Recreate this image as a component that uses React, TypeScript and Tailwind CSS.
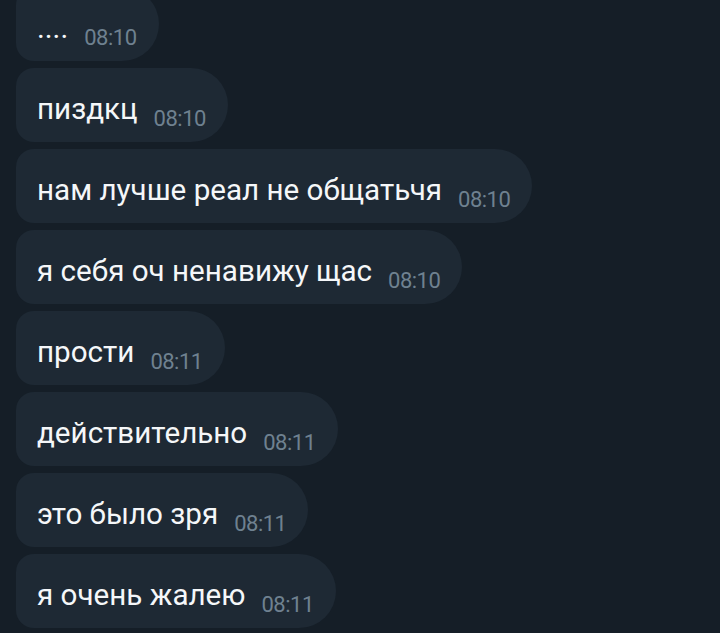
const messages = [
  { text: '....', time: '08:10' },
  { text: 'пиздкц', time: '08:10' },
  { text: 'нам лучше реал не общатьчя', time: '08:10' },
  { text: 'я себя оч ненавижу щас', time: '08:10' },
  { text: 'прости', time: '08:11' },
  { text: 'действительно', time: '08:11' },
  { text: 'это было зря', time: '08:11' },
  { text: 'я очень жалею', time: '08:11' },
];

function Bubble({ text, time }: { text: string; time: string }) {
  return (
    <div className="flex h-[74px] w-fit items-baseline rounded-l-[18px] rounded-r-[37px] bg-[#1e2934] pl-[21px] pr-[22px] pt-[24px]">
      <span className="text-[29.6px] leading-[34px] text-[#f5f7f9]">{text}</span>
      <span className="ml-[16px] translate-y-[7px] text-[22px] leading-[24px] tracking-[-0.5px] text-[#6f8190]">{time}</span>
    </div>
  );
}

export default function App() {
  return (
    <div className="h-[633px] w-[720px] overflow-hidden bg-[#151e27] font-['Roboto',sans-serif]">
      <div className="-mt-[13px] flex flex-col gap-[7px] pl-[16px]">
        {messages.map((m, i) => (
          <Bubble key={i} text={m.text} time={m.time} />
        ))}
      </div>
    </div>
  );
}
